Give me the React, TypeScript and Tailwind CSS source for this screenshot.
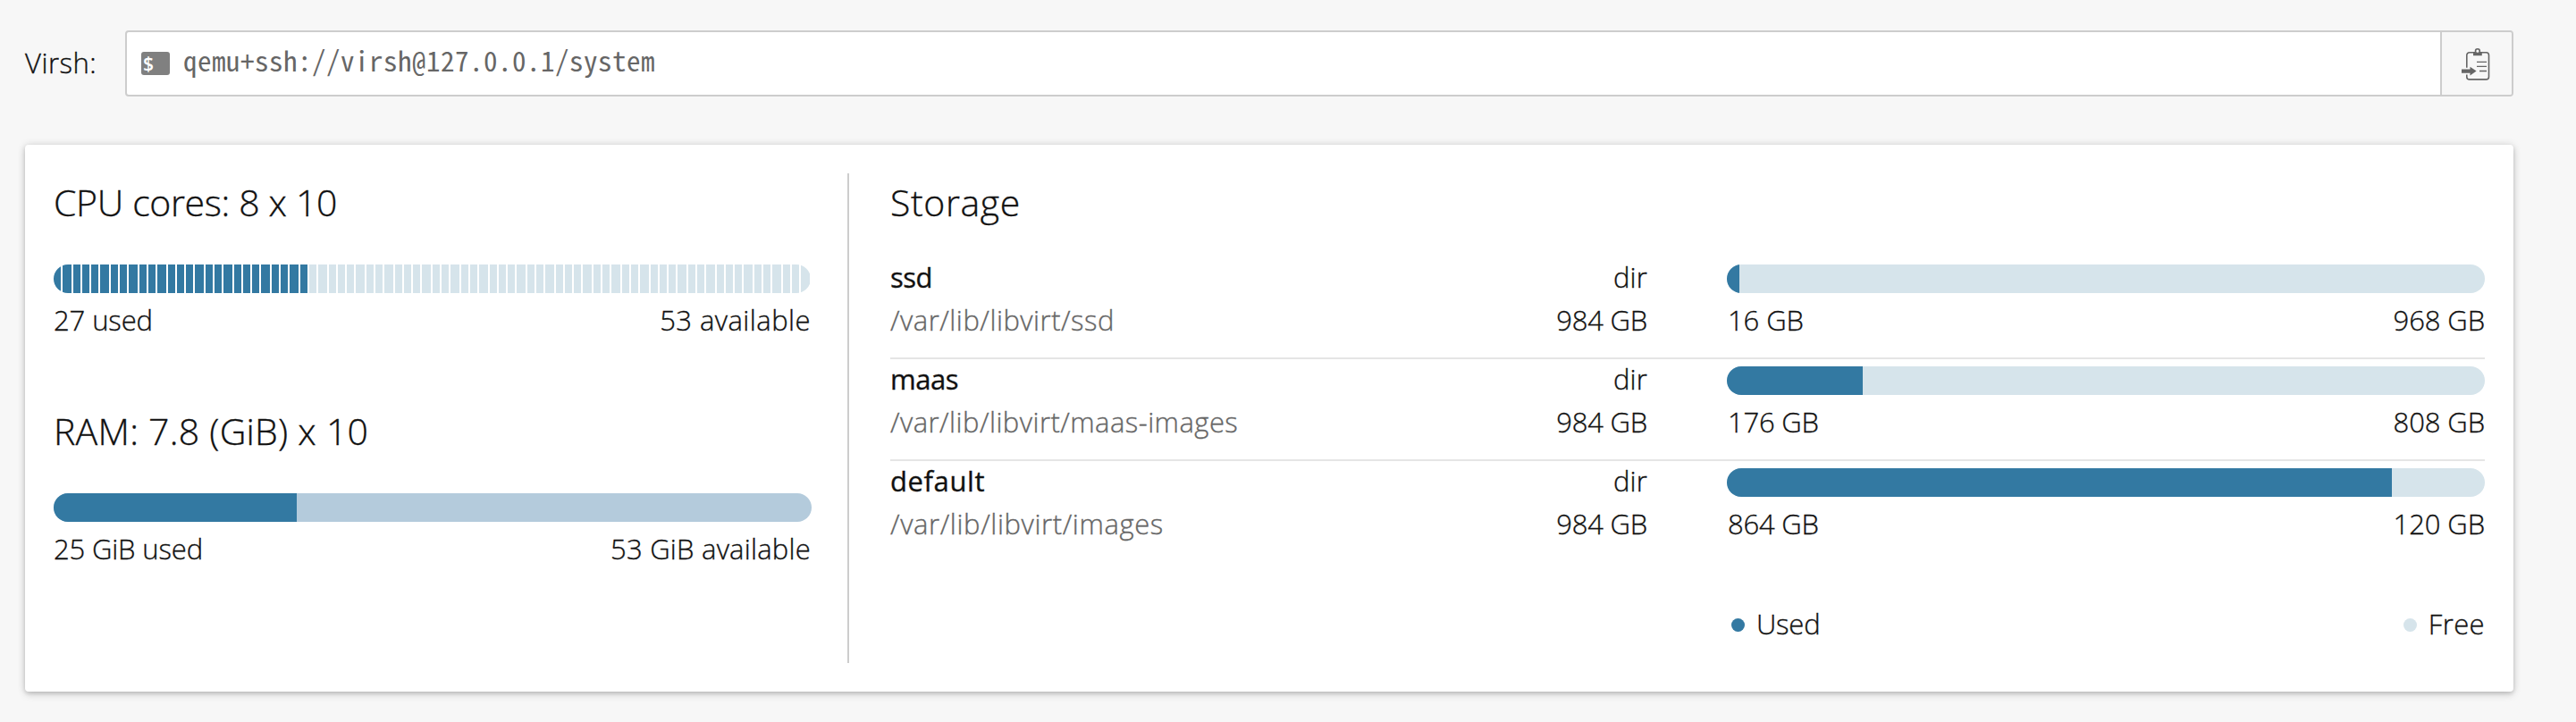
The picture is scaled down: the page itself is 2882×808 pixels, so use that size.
import React from "react";

const SEGMENTS = 80;
const USED_CORES = 27;
const PITCH = 10.5875;

const edges = Array.from({ length: SEGMENTS + 1 }, (_, i) => 2 * Math.round((PITCH * i) / 2));

function CoresMeter() {
  return (
    <div className="flex h-8 w-[847px] gap-[2px] overflow-hidden rounded-full">
      {edges.slice(0, SEGMENTS).map((start, i) => (
        <div
          key={start}
          className={i < USED_CORES ? "h-8 shrink-0 bg-[#3379a2]" : "h-8 shrink-0 bg-[#d6e4eb]"}
          style={{ width: edges[i + 1] - start - 2 }}
        />
      ))}
    </div>
  );
}

function Meter({ used, total, track }: { used: number; total: number; track: string }) {
  return (
    <div className={`h-8 w-[848px] overflow-hidden rounded-full ${track}`}>
      <div className="h-8 bg-[#3379a2]" style={{ width: 2 * Math.round((used / total) * 424) }} />
    </div>
  );
}

function TerminalIcon() {
  return (
    <span className="flex h-[26px] w-8 shrink-0 items-center rounded-[3px] bg-[#808080] pl-0.5 font-['Open_Sans',sans-serif] text-[21px] leading-[26px] font-semibold text-white">
      $
    </span>
  );
}

function PasteIcon() {
  return (
    <svg width="32" height="36" viewBox="0 0 32 36" fill="none">
      <path
        d="M5.8 21.8V7.8a3 3 0 0 1 3-3H27.5a3 3 0 0 1 3 3V31.9a3 3 0 0 1-3 3H8.8a3 3 0 0 1-3-3V29.6"
        stroke="#666"
        strokeWidth="1.6"
      />
      <path d="M13 8.2V5.2a1 1 0 0 1 1-1H21.8a1 1 0 0 1 1 1V8.2Z" fill="#666" />
      <circle cx="17.9" cy="3.2" r="2.4" fill="#f7f7f7" stroke="#666" strokeWidth="1.6" />
      <path d="M17 15.4H28M17 20.4H28M20 25.5H28" stroke="#666" strokeWidth="1.4" />
      <path d="M0 23.4H9.5V20.8L16.6 25.6L9.5 30.4V27.8H0Z" fill="#666" />
    </svg>
  );
}

const pools = [
  { name: "ssd", nameTrack: "tracking-[-0.5px]", path: "/var/lib/libvirt/ssd", pathTrack: "tracking-[0.5px]", used: 16, usedTrack: "tracking-[-0.1px]", free: 968 },
  { name: "maas", nameTrack: "tracking-[-0.5px]", path: "/var/lib/libvirt/maas-images", pathTrack: "tracking-[0.45px]", used: 176, usedTrack: "tracking-[-0.2px]", free: 808 },
  { name: "default", nameTrack: "tracking-[0.6px]", path: "/var/lib/libvirt/images", pathTrack: "tracking-[0.6px]", used: 864, usedTrack: "tracking-[-0.2px]", free: 120 },
];

export default function App() {
  return (
    <div className="h-[808px] w-[2882px] bg-[#f7f7f7] pt-[34px] pl-7 font-['Open_Sans','Noto_Sans',sans-serif] text-[31px] leading-[48px] font-light whitespace-nowrap text-[#111] [-webkit-text-stroke:0.35px]">
      <div className="flex h-[74px] w-[2784px]">
        <div className="w-28 shrink-0 pt-3 tracking-[0.5px]">Virsh:</div>
        <div className="flex flex-1 rounded-[4px] border-2 border-[#cdcdcd] bg-white [-webkit-text-stroke:0]">
          <div className="flex flex-1 pl-4">
            <div className="pt-[22px]">
              <TerminalIcon />
            </div>
            <div className="pt-[7px] pl-[15px] font-['Noto_Sans_Mono_CJK_JP',monospace] text-[31px] font-normal tracking-[0.5px] text-[#666]">
              qemu+ssh://virsh@127.0.0.1/system
            </div>
          </div>
          <button className="flex w-20 items-start rounded-r-[2px] border-l-2 border-[#cdcdcd] bg-[#f7f7f7] pt-[18px] pl-[22px]">
            <PasteIcon />
          </button>
        </div>
      </div>

      <div className="mt-[54px] flex h-[612px] w-[2784px] rounded-[4px] bg-white p-8 shadow-[0_2px_4px_0_rgba(0,0,0,0.12),0_4px_10px_0_rgba(0,0,0,0.1),0_0_10px_0_rgba(0,0,0,0.12)]">
        <section className="w-[848px] shrink-0">
          <h4 className="text-[41px] leading-[64px] tracking-[-0.35px]">CPU cores: 8 x 10</h4>
          <div className="mt-[38px]">
            <CoresMeter />
          </div>
          <div className="mt-1.5 flex justify-between pr-px">
            <span className="tracking-[-0.1px]">27 used</span>
            <span className="tracking-[0.45px]">53 available</span>
          </div>
          <h4 className="mt-[68px] text-[41px] leading-[64px] tracking-[0.25px]">RAM: 7.8 (GiB) x 10</h4>
          <div className="mt-[38px]">
            <Meter used={25} total={78} track="bg-[#b4cbdc]" />
          </div>
          <div className="mt-1.5 flex justify-between pr-px">
            <span className="tracking-[-0.15px]">25 GiB used</span>
            <span className="tracking-[0.22px]">53 GiB available</span>
          </div>
        </section>

        <div className="ml-10 w-0.5 shrink-0 bg-[#cdcdcd]" />

        <section className="ml-[46px] flex-1">
          <h4 className="text-[41px] leading-[64px] tracking-[0.6px]">Storage</h4>
          <div className="mt-[30px] divide-y-2 divide-[#e5e5e5]">
            {pools.map((p) => (
              <div key={p.name} className="flex pb-[18px] last:pb-0">
                <div className="flex w-[936px] shrink-0 justify-between pr-[89px]">
                  <div>
                    <div className={`leading-[44px] font-normal ${p.nameTrack}`}>{p.name}</div>
                    <div className={`mt-0.5 text-[#666] ${p.pathTrack}`}>{p.path}</div>
                  </div>
                  <div className="text-right">
                    <div className="leading-[44px] tracking-[0.2px]">dir</div>
                    <div className="mt-0.5 tracking-[-0.2px]">984 GB</div>
                  </div>
                </div>
                <div className="pt-2">
                  <Meter used={p.used} total={984} track="bg-[#d6e4eb]" />
                  <div className="mt-1.5 flex justify-between pl-px">
                    <span className={p.usedTrack}>{p.used} GB</span>
                    <span className="tracking-[-0.1px]">{p.free} GB</span>
                  </div>
                </div>
              </div>
            ))}
          </div>
          <div className="mt-16 ml-[936px] flex justify-between pl-[5px]">
            <div className="flex items-center gap-[13px]">
              <span className="mt-[3px] size-[15px] rounded-full bg-[#3379a2]" />
              <span className="tracking-[-0.2px]">Used</span>
            </div>
            <div className="flex items-center gap-[13px]">
              <span className="mt-[3px] size-[15px] rounded-full bg-[#d6e4eb]" />
              <span className="tracking-[0.4px]">Free</span>
            </div>
          </div>
        </section>
      </div>
    </div>
  );
}
